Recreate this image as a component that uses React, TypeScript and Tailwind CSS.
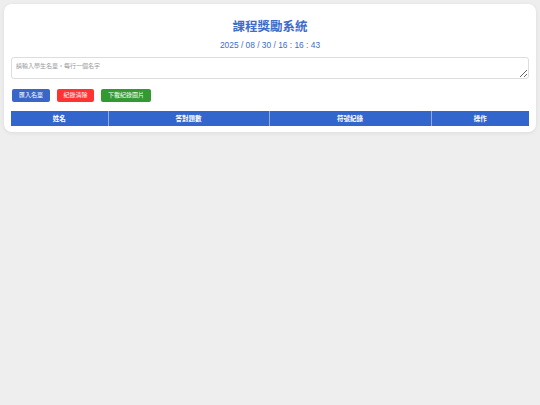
import React from "react";

const cjk = { fontFamily: '"Liberation Sans", "Noto Sans CJK TC", sans-serif' };

function App() {
  return (
    <div className="min-h-screen bg-[#eeeeee] pt-[4px] px-[4px]" style={cjk}>
      <div className="rounded-[8px] bg-white px-[7px] pt-[14px] pb-[6px] shadow-[0_1px_4px_rgba(0,0,0,0.08)]">
        <h1 className="h-[18px] text-center text-[12.5px] font-bold leading-[18px] text-[#3d6dc9]">
          課程獎勵系統
        </h1>
        <p className="mt-[3px] h-[12px] text-center text-[8.4px] leading-[12px] text-[#3d6dc9]">
          2025 / 08 / 30 / 16 : 16 : 43
        </p>
        <textarea
          className="mt-[6px] block h-[22px] w-full rounded-[3px] border border-[#dddddd] px-[4px] py-[4px] text-[6px] leading-[9px] text-gray-700 outline-none placeholder:text-[#999999]"
          placeholder="請輸入學生名單，每行一個名字"
        />
        <div className="mt-[10px] flex gap-[7px] pl-[1px]">
          <button className="h-[13px] w-[38px] rounded-[2px] bg-[#3a66c8] text-[6px] leading-[13px] text-white">
            匯入名單
          </button>
          <button className="h-[13px] w-[37px] rounded-[2px] bg-[#ff3333] text-[6px] leading-[13px] text-white">
            紀錄清除
          </button>
          <button className="h-[13px] w-[50px] rounded-[2px] bg-[#339933] text-[6px] leading-[13px] text-white">
            下載紀錄圖片
          </button>
        </div>
        <table className="mt-[9px] w-full table-fixed border-collapse">
          <colgroup>
            <col className="w-[97px]" />
            <col className="w-[161px]" />
            <col className="w-[162px]" />
            <col className="w-[98px]" />
          </colgroup>
          <thead>
            <tr className="h-[15px] bg-[#3366cc] text-[6.5px] font-bold text-white">
              <th className="border-r border-[#8fa9e3] p-0 leading-[15px]">姓名</th>
              <th className="border-r border-[#8fa9e3] p-0 leading-[15px]">答對題數</th>
              <th className="border-r border-[#8fa9e3] p-0 leading-[15px]">符號紀錄</th>
              <th className="p-0 leading-[15px]">操作</th>
            </tr>
          </thead>
          <tbody />
        </table>
      </div>
    </div>
  );
}

export default App;
